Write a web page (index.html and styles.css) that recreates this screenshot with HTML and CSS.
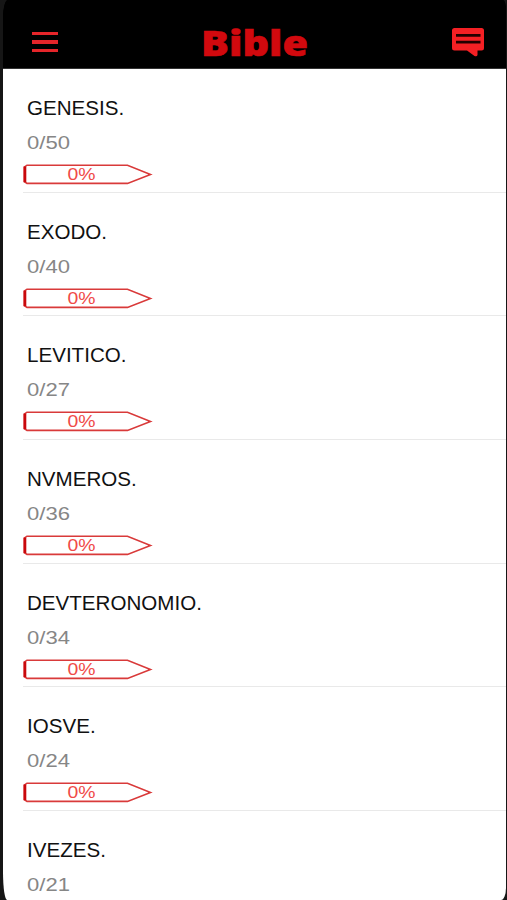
FILE: index.html
```html
<!DOCTYPE html>
<html lang="es">
<head>
  <meta charset="UTF-8">
  <meta name="viewport" content="width=device-width, initial-scale=1.0">
  <title>Bible</title>
  <link rel="stylesheet" href="styles.css">
</head>
<body>
  <div class="screen">
    <header class="topbar">
      <button class="menu" aria-label="Menu"><span></span><span></span><span></span></button>
      <h1>Bible</h1>
      <button class="comments" aria-label="Comments">
        <svg width="33" height="30" viewBox="0 0 33 30">
          <path fill="#f42024" d="M2.5 0H29.5Q32 0 32 2.5V20Q32 22.5 29.5 22.5H25.5V27Q25 29 22.5 28L15 22.5H2.5Q0 22.5 0 20V2.5Q0 0 2.5 0Z"/>
          <path stroke="#230000" stroke-width="2.8" d="M4 7.4H28.5M4 14.2H28.5"/>
        </svg>
      </button>
    </header>
    <main class="books" id="books"></main>
  </div>
  <script>
    const books = [
      ["GENESIS.", 50],
      ["EXODO.", 40],
      ["LEVITICO.", 27],
      ["NVMEROS.", 36],
      ["DEVTERONOMIO.", 34],
      ["IOSVE.", 24],
      ["IVEZES.", 21]
    ];

    document.getElementById("books").innerHTML = books.map(([name, chapters]) => `
      <section class="book">
        <h2>${name}</h2>
        <p class="count">0/${chapters}</p>
        <div class="progress">
          <svg width="130" height="21" viewBox="0 0 130 21">
            <path fill="none" stroke="#d93a3a" stroke-width="1.6" d="M4 1.2H104.5L127.5 10.5L104.5 19.4H4L1.2 17.5V3.2Z"/>
            <path fill="none" stroke="#c9080c" stroke-width="2.6" d="M2 2.6V18.2"/>
          </svg>
          <span>0%</span>
        </div>
      </section>`).join("");
  </script>
</body>
</html>
```
FILE: styles.css
```css
html, body {
  margin: 0;
  padding: 0;
  height: 100%;
  overflow: hidden;
  background-color: #161616;
  font-family: "Liberation Sans", Arial, sans-serif;
}
.screen {
  height: 100vh;
  margin: 0 1px 0 3px;
  overflow: hidden;
  background-color: #000;
  border-radius: 5px 3px 5px 4px / 18px 10px 12px 28px;
}
.topbar {
  display: flex;
  justify-content: space-between;
  align-items: flex-start;
  height: 69px;
  padding: 0 21px 0 29px;
  box-sizing: border-box;
  background-color: #000;
  border-bottom: 1px solid #333;
}
.topbar button {
  padding: 0;
  border: none;
  background: none;
}
.menu {
  display: flex;
  flex-direction: column;
  gap: 5px;
  width: 26px;
  margin-top: 32px;
}
.menu span {
  height: 3.4px;
  background-color: #e5252a;
}
.topbar h1 {
  margin: 18px 0 0;
  font: 800 36px/49px "Open Sans", sans-serif;
  color: #d2090e;
  -webkit-text-stroke: 0.6px #d2090e;
  transform: scaleX(1.15);
}
.comments {
  margin-top: 28px;
  height: 30px;
}
.comments svg {
  display: block;
}
.books {
  height: 831px;
  background-color: #fff;
}
.book {
  height: 123.65px;
  margin-left: 20px;
  padding: 27px 0 0 4px;
  box-sizing: border-box;
  border-bottom: 1px solid #e9e9e9;
}
.book h2 {
  margin: 0;
  font-size: 19.6px;
  font-weight: normal;
  line-height: 24px;
  color: #111;
  transform: scaleX(1.05);
  transform-origin: left;
}
.count {
  margin: 11px 0 0;
  font-size: 19px;
  line-height: 24px;
  color: #868686;
  transform: scaleX(1.16);
  transform-origin: left;
}
.progress {
  display: grid;
  width: 130px;
  height: 21px;
  margin: 9px 0 0 -4px;
}
.progress svg,
.progress span {
  grid-area: 1 / 1;
}
.progress span {
  width: 117px;
  text-align: center;
  font-size: 17px;
  line-height: 22px;
  color: #f04a48;
  transform: scaleX(1.14);
}
/* the last row ends at the fold */
.book:last-child .progress {
  display: none;
}
```
